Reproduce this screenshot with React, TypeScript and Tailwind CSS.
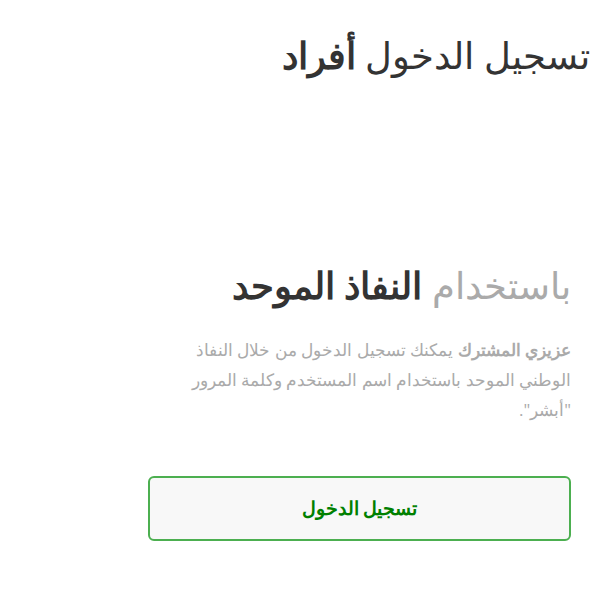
export default function App() {
  return (
    <div
      dir="rtl"
      className="min-h-screen bg-white"
      style={{ fontFamily: '"Open Sans", sans-serif' }}
    >
      <div className="pr-[15px] pt-[30px]">
        <h1 className="text-[37px] leading-[50px] text-[#333]">
          تسجيل الدخول <span className="font-bold">أفراد</span>
        </h1>
      </div>

      <div className="mt-[180px] mr-[34px] w-[423px]">
        <h2 className="text-[37px] leading-[50px] text-[#aaa]">
          باستخدام <span className="font-bold text-[#333]">النفاذ الموحد</span>
        </h2>
        <p className="mt-[25px] pl-[40px] text-[17px] leading-[30px] text-[#aaa]">
          <span className="font-bold">عزيزي المشترك</span> يمكنك تسجيل الدخول من خلال النفاذ الوطني الموحد باستخدام اسم المستخدم وكلمة المرور "أبشر".
        </p>
        <button className="mt-[51px] flex h-[65px] w-full items-center justify-center rounded-[6px] border-2 border-[#4caf50] bg-[#f8f8f8] text-[19px] font-bold text-[#008000]">
          تسجيل الدخول
        </button>
      </div>
    </div>
  );
}
